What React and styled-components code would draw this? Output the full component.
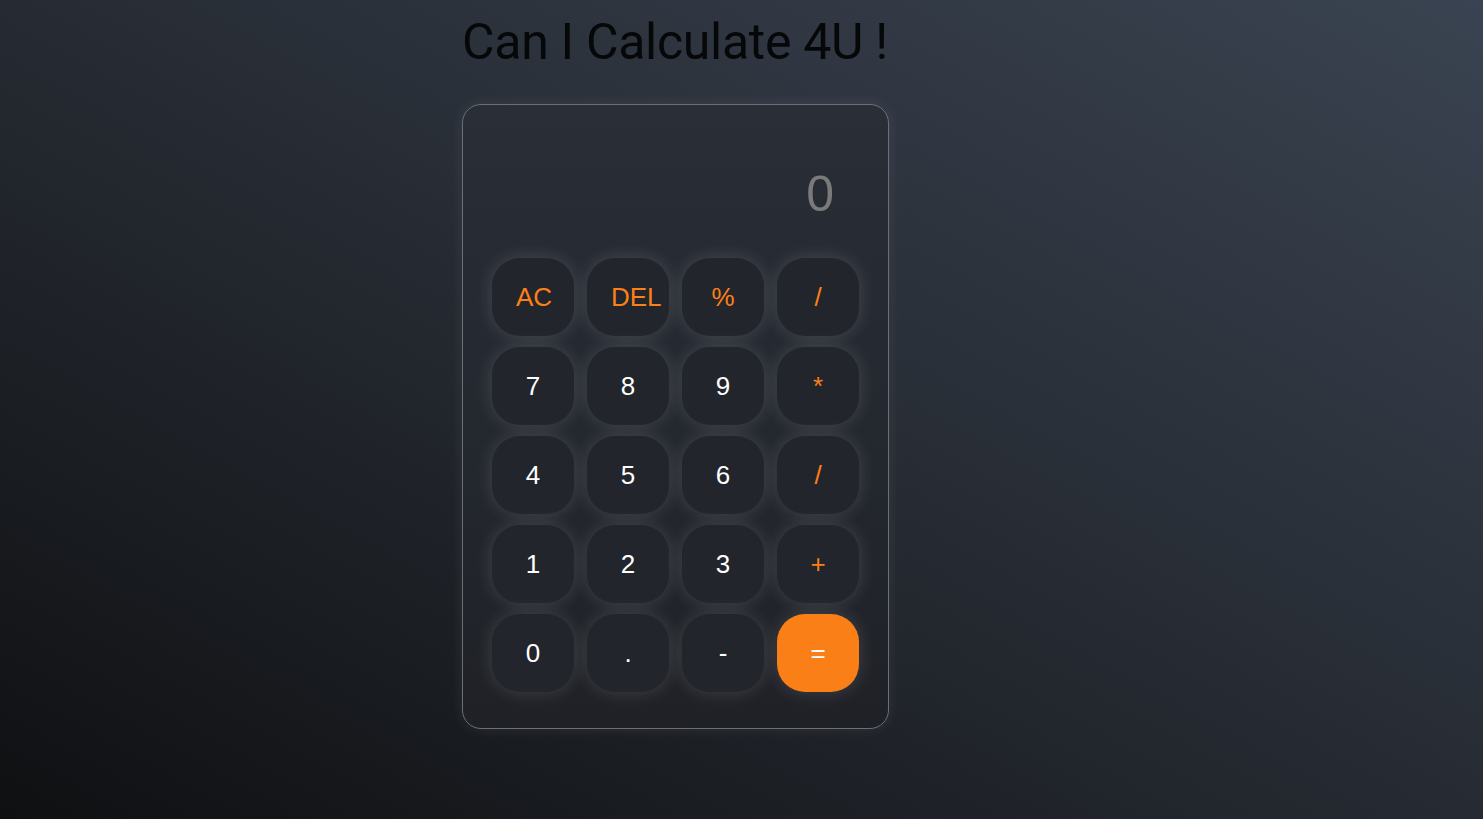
import React, { useState } from "react";
import styled, { createGlobalStyle } from "styled-components";

const GlobalStyle = createGlobalStyle`
  * {
    box-sizing: border-box;
  }

  body {
    margin: 0;
    min-height: 100vh;
    font-family: "Liberation Sans", Arial, sans-serif;
    background: linear-gradient(to top right, #0f1012 0%, #262b33 50%, #3a4351 100%);
    background-attachment: fixed;
  }
`;

const Page = styled.div`
  min-height: 100vh;
  padding-left: 462px;
  display: flex;
  flex-direction: column;
  align-items: flex-start;
`;

const Title = styled.h1`
  margin: 13px 0 33px;
  font-family: Roboto, "Liberation Sans", sans-serif;
  font-size: 50px;
  font-weight: 400;
  color: #060708;
  letter-spacing: -0.3px;
`;

// calculator body
const Calculator = styled.div`
  width: 427px;
  padding: 30px 29px 36px;
  border: 1px solid #6c6f75;
  border-radius: 19px;
  background: linear-gradient(to bottom, #292e37 0%, #23272e 60%, #1f2126 100%);
  box-shadow: 0 0 14px rgba(255, 255, 255, 0.08);
`;

const Display = styled.div`
  height: 112px;
  display: flex;
  flex-direction: column;
  justify-content: flex-end;
  padding: 0 25px 24px 0;
  text-align: right;
  font-size: 50px;
  line-height: 58px;
  color: #7a7a7a;
  overflow: hidden;
`;

const Keys = styled.div`
  margin-top: 11px;
  display: grid;
  grid-template-columns: repeat(4, 82px);
  grid-auto-rows: 78px;
  column-gap: 13px;
  row-gap: 11px;
`;

const Key = styled.button`
  width: 82px;
  height: 78px;
  padding: 0 24px;
  border: none;
  border-radius: 28px;
  background: ${(props) => (props.$equals ? "#fb7f17" : "#22252b")};
  color: ${(props) =>
    props.$equals ? "#ffffff" : props.$op ? "#fc7f1a" : "#ffffff"};
  font-family: "Liberation Sans", Arial, sans-serif;
  font-size: 26px;
  text-align: center;
  white-space: nowrap;
  cursor: pointer;
  box-shadow: 0 0 18px rgba(255, 255, 255, 0.15);

  &:active {
    transform: scale(0.97);
  }
`;

const keys = [
  { label: "AC", op: true },
  { label: "DEL", op: true },
  { label: "%", op: true },
  { label: "/", op: true },
  { label: "7" },
  { label: "8" },
  { label: "9" },
  { label: "*", op: true },
  { label: "4" },
  { label: "5" },
  { label: "6" },
  { label: "/", op: true },
  { label: "1" },
  { label: "2" },
  { label: "3" },
  { label: "+", op: true },
  { label: "0" },
  { label: "." },
  { label: "-" },
  { label: "=", equals: true },
];

function App() {
  const [value, setValue] = useState("0");

  const handleKey = (label) => {
    if (label === "AC") return setValue("0");
    if (label === "DEL") return setValue((v) => (v.length > 1 ? v.slice(0, -1) : "0"));
    if (label === "=") {
      try {
        // eslint-disable-next-line no-new-func
        const result = Function(`return (${value})`)();
        setValue(String(result));
      } catch (e) {
        setValue("0");
      }
      return;
    }
    setValue((v) => (v === "0" && label !== "." ? label : v + label));
  };

  return (
    <>
      <GlobalStyle />
      <Page>
        <Title>Can I Calculate 4U !</Title>
        <Calculator>
          <Display>{value}</Display>
          <Keys>
            {keys.map((k, i) => (
              <Key
                key={i}
                $op={k.op}
                $equals={k.equals}
                onClick={() => handleKey(k.label)}
              >
                {k.label}
              </Key>
            ))}
          </Keys>
        </Calculator>
      </Page>
    </>
  );
}

export default App;
